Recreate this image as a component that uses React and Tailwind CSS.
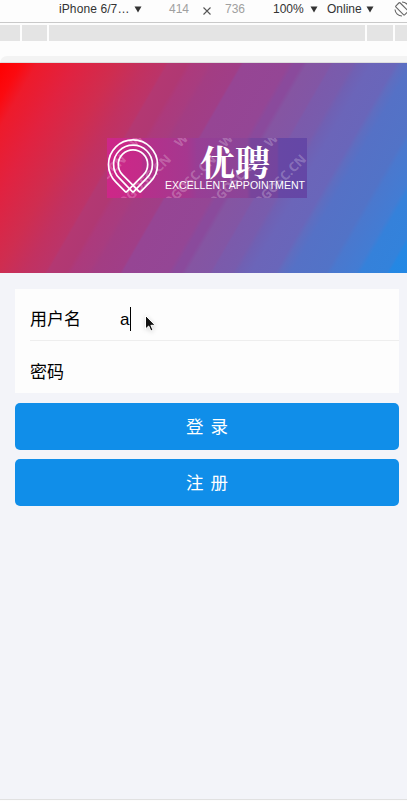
const watermarkEnds = [20, 65, 110, 155, 200];

function Logo() {
  return (
    <svg width="200" height="60" viewBox="0 0 200 60" className="block">
      <defs>
        <linearGradient id="logoBg" x1="0" y1="0" x2="1" y2="0">
          <stop offset="0" stopColor="#cd2788" />
          <stop offset="0.17" stopColor="#c42b89" />
          <stop offset="0.18" stopColor="#b5308b" />
          <stop offset="0.4" stopColor="#a6378f" />
          <stop offset="0.45" stopColor="#983e95" />
          <stop offset="0.7" stopColor="#8a4598" />
          <stop offset="0.72" stopColor="#78459c" />
          <stop offset="0.85" stopColor="#74459e" />
          <stop offset="0.86" stopColor="#6747a5" />
          <stop offset="1" stopColor="#6447a6" />
        </linearGradient>
      </defs>
      <rect width="200" height="60" fill="url(#logoBg)" />
      <g fill="#fff" fillOpacity="0.24" fontFamily="'Open Sans', sans-serif" fontWeight="700" fontSize="13">
        {watermarkEnds.map((x) => (
          <g key={x}>
            <text textAnchor="end" transform={`translate(${x} 22) rotate(-45)`}>LOGOSC.CN</text>
            <text transform={`translate(${x + 8} 10) rotate(-45)`}>W</text>
          </g>
        ))}
      </g>
      <g fill="none" stroke="#fff" strokeWidth="1.7" strokeLinejoin="round">
        <path d="M19 54.300L8.700 43.800A24.500 24.500 0 1 1 43.300 43.800L33 54.300" />
        <path d="M26 54.300L12.300 40.200A19.400 19.400 0 1 1 39.700 40.200L26 54.300" />
        <path d="M33 54.300L15.600 36.900A14.700 14.700 0 1 1 36.400 36.900L19 54.300" />
      </g>
      <text x="93" y="37.500" fill="#fff" fontSize="35" fontWeight="700" textLength="70" fontFamily="'Noto Serif CJK SC', 'Noto Sans CJK SC', serif">优聘</text>
      <text x="58" y="51" fill="#fff" fontSize="11" textLength="140" lengthAdjust="spacingAndGlyphs" fontFamily="'Liberation Sans', sans-serif">EXCELLENT APPOINTMENT</text>
    </svg>
  );
}

function Caret({ className }) {
  return (
    <svg width="8" height="7" viewBox="0 0 8 7" className={className}>
      <path d="M0.500 0.500h7L4 6.500z" fill="#333" />
    </svg>
  );
}

function DeviceBar() {
  return (
    <div className="flex h-[23px] w-[420px] items-start border-b border-[#c9c9c9] pt-[1px] pl-[59px] text-[12px] leading-4 text-[#333]">
      <span className="w-[75px] tracking-[0.1px]">iPhone 6/7…</span>
      <Caret className="mt-[5px]" />
      <span className="ml-[27px] w-[34px] text-[#a0a0a0]">414</span>
      <svg width="8" height="8" viewBox="0 0 8 8" className="mt-[6px]">
        <path d="M0.500 0.500l7 7M7.500 0.500l-7 7" stroke="#555" strokeWidth="1.100" />
      </svg>
      <span className="ml-[14px] w-[48px] text-[#a0a0a0]">736</span>
      <span className="w-[37px]">100%</span>
      <Caret className="mt-[5px]" />
      <span className="ml-[9px] w-[39px]">Online</span>
      <Caret className="mt-[5px]" />
      <svg width="16" height="16" viewBox="0 0 16 16" className="ml-[20px] shrink-0" fill="none" stroke="#666" strokeWidth="1.100">
        <rect x="5" y="1.500" width="6" height="12.500" rx="1" transform="rotate(-45 8 8)" />
        <path d="M1 8.500A7 7 0 0 0 8 15M8 1A7 7 0 0 1 15 8" />
      </svg>
    </div>
  );
}

export default function App() {
  return (
    <div className="relative flex h-[801px] w-[407px] flex-col overflow-hidden bg-[#fdfdfd] font-['Liberation_Sans','Noto_Sans_CJK_SC',sans-serif] text-black">
      <DeviceBar />
      <div className="mt-[2px] flex h-4 shrink-0 gap-[2px]">
        <div className="w-5 bg-[#e4e4e4]" />
        <div className="w-[25px] bg-[#e4e4e4]" />
        <div className="w-[316px] bg-[#e4e4e4]" />
        <div className="w-[26px] bg-[#e4e4e4]" />
        <div className="flex-1 bg-[#e4e4e4]" />
      </div>
      <div className="mt-[15px] h-[7px] shrink-0 rounded-tl-[10px] border-b border-[#dedede] bg-[#f3f3f3]" />
      <main className="flex h-[736px] w-[414px] shrink-0 flex-col bg-[#f3f4f9]">
        <header className="flex h-[210px] items-start justify-center bg-[linear-gradient(120deg,#ff0000_0%,#fb0a10_4%,#ee1a2b_7%,#e12240_14%,#cf2d50_22%,#c23160_27%,#bb3469_31%,#b33872_31.5%,#b03873_35%,#ac3a7c_36%,#a83c7f_39%,#a33d83_40%,#a03e87_45%,#964594_45.5%,#944695_54%,#8a4a9c_55%,#8a4a9c_56.5%,#8555a2_57.5%,#8256a5_61.8%,#7b5aab_62.3%,#785cad_66%,#7060b3_67%,#6b65b9_69.500%,#6966ba_74%,#5f6dc0_75%,#5571c6_77%,#5273c7_83.5%,#4a78ce_84.5%,#437cd3_89%,#3581da_90%,#3382db_94.8%,#2587e3_95.4%,#2288e5_100%)] pt-[75px]">
          <Logo />
        </header>
        <form className="px-[15px] pt-4 text-[17px]">
          <div className="h-[104px] bg-[#fdfdfd] pl-[15px]">
            <div className="flex h-[52px] items-center border-b border-[#eeeeee] pt-[10px]">
              <label className="w-[90px]">用户名</label>
              <span className="w-[10px] text-[17px]">a</span>
              <span className="mb-[2px] h-6 w-px bg-black" />
            </div>
            <div className="flex h-[52px] items-center pt-[12px]">
              <label>密码</label>
            </div>
          </div>
          <button type="button" className="mt-[10px] block h-[47px] w-full rounded-[5px] bg-[#108ee9] pt-[2px] text-[17.500px] text-white">
            <span className="whitespace-pre [word-spacing:2px]">登 录</span>
          </button>
          <button type="button" className="mt-[9px] block h-[47px] w-full rounded-[5px] bg-[#108ee9] pt-[2px] text-[17.500px] text-white">
            <span className="whitespace-pre [word-spacing:2px]">注 册</span>
          </button>
        </form>
      </main>
      <div className="h-px shrink-0 bg-[#e1e1e1]" />
      <svg width="14" height="20" viewBox="0 0 14 20" className="absolute top-[314px] left-[144px] drop-shadow-sm">
        <path d="M1.500 1.500V15L4.700 12L6.900 17L9 16.100L6.900 11.300H11.200z" fill="#111" stroke="#fff" strokeWidth="1" />
      </svg>
    </div>
  );
}
